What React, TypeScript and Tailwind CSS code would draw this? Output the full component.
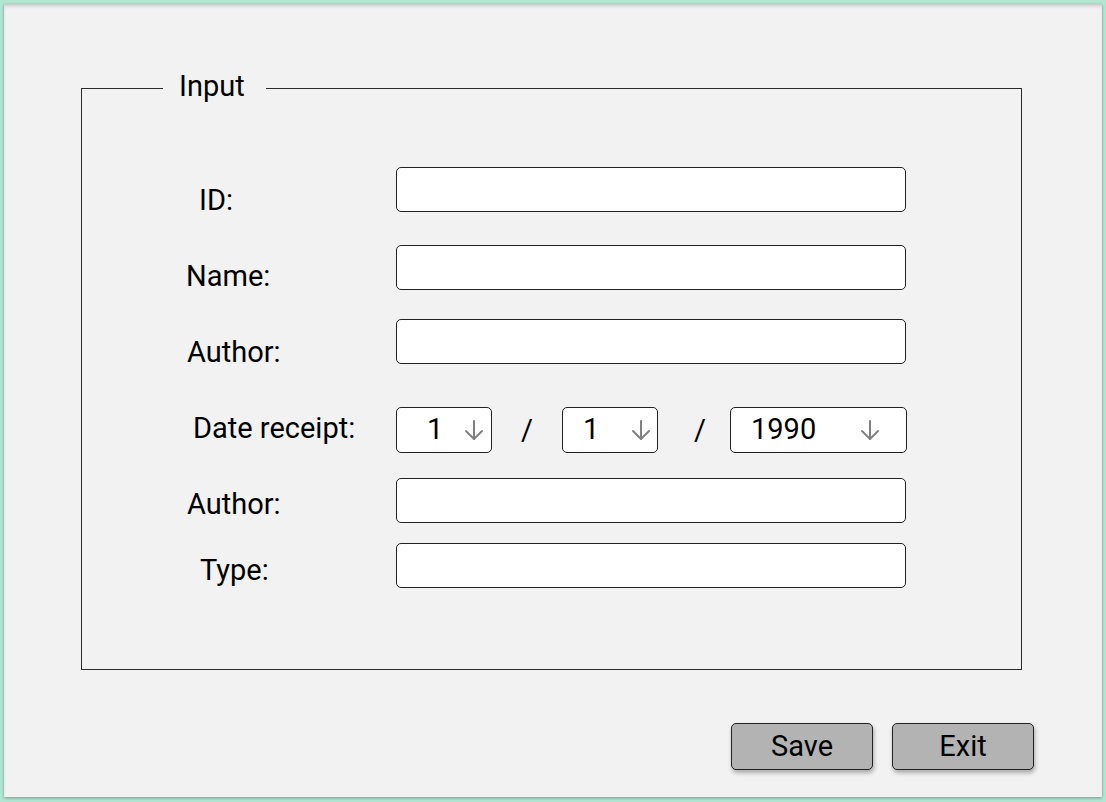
const font = { fontFamily: 'Roboto, "Liberation Sans", sans-serif' };

function DownArrow() {
  return (
    <svg width="18" height="20" viewBox="0 0 18 20" fill="none" stroke="#808080" strokeWidth="2" strokeLinecap="round" strokeLinejoin="round">
      <path d="M9 1V19" />
      <path d="M1 11L9 19L17 11" />
    </svg>
  );
}

function TextRow({ label, rowClass, labelClass }: { label: string; rowClass: string; labelClass: string }) {
  return (
    <div className={`flex items-start h-[45px] ${rowClass}`}>
      <div className="w-[314px] h-[45px] shrink-0">
        <span className={`block leading-[34px] ${labelClass}`}>{label}</span>
      </div>
      <input type="text" className="w-[510px] h-[45px] bg-white border border-[#222] rounded-[5px] outline-none px-3" />
    </div>
  );
}

export default function App() {
  return (
    <div className="w-[1106px] h-[802px] bg-[#b4e6d4] pt-[4px] pl-[4px] overflow-hidden" style={font}>
      <div className="w-[1098px] h-[793px] bg-[#f2f2f2] flex flex-col shadow-[0_1px_3px_rgba(0,0,0,0.35),inset_0_3px_4px_-2px_rgba(0,0,0,0.25)] text-[29px] text-black">
        <div className="pt-[69px] pl-[77px]">
          <fieldset className="w-[941px] h-[597px] border border-[#2b2b2b] m-0 p-0">
            <legend className="ml-[81px] pl-[16px] pr-[21px] leading-[26px] pb-[4px]">Input</legend>

            <TextRow label="ID:" rowClass="mt-[64px]" labelClass="pl-[117px] pt-[16px]" />
            <TextRow label="Name:" rowClass="mt-[33px]" labelClass="pl-[104px] pt-[14px]" />
            <TextRow label="Author:" rowClass="mt-[29px]" labelClass="pl-[105px] pt-[16px]" />

            <div className="flex items-start h-[46px] mt-[43px]">
              <div className="w-[314px] h-[46px] shrink-0">
                <span className="block leading-[34px] pl-[111px] pt-[4px]">Date receipt:</span>
              </div>
              <div className="w-[96px] h-[46px] bg-white border border-[#222] rounded-[5px] flex items-center">
                <span className="pl-[30px]">1</span>
                <span className="ml-auto mr-[8px] flex"><DownArrow /></span>
              </div>
              <span className="w-[70px] text-center leading-[46px]">/</span>
              <div className="w-[96px] h-[46px] bg-white border border-[#222] rounded-[5px] flex items-center">
                <span className="pl-[20px]">1</span>
                <span className="ml-auto mr-[7px] flex"><DownArrow /></span>
              </div>
              <span className="w-[72px] pl-[12px] text-center leading-[46px]">/</span>
              <div className="w-[177px] h-[46px] bg-white border border-[#222] rounded-[5px] flex items-center">
                <span className="pl-[20px]">1990</span>
                <span className="ml-auto mr-[27px] flex"><DownArrow /></span>
              </div>
            </div>

            <TextRow label="Author:" rowClass="mt-[25px]" labelClass="pl-[105px] pt-[9px]" />
            <TextRow label="Type:" rowClass="mt-[20px]" labelClass="pl-[118px] pt-[10px]" />
          </fieldset>
        </div>

        <div className="flex justify-end gap-[19px] pr-[68px] mt-[53px]">
          <button className="w-[142px] h-[47px] bg-[#b3b3b3] border border-[#222] rounded-[5px] shadow-[1px_3px_4px_rgba(0,0,0,0.3)] leading-none">Save</button>
          <button className="w-[142px] h-[47px] bg-[#b3b3b3] border border-[#222] rounded-[5px] shadow-[1px_3px_4px_rgba(0,0,0,0.3)] leading-none">Exit</button>
        </div>
      </div>
    </div>
  );
}
